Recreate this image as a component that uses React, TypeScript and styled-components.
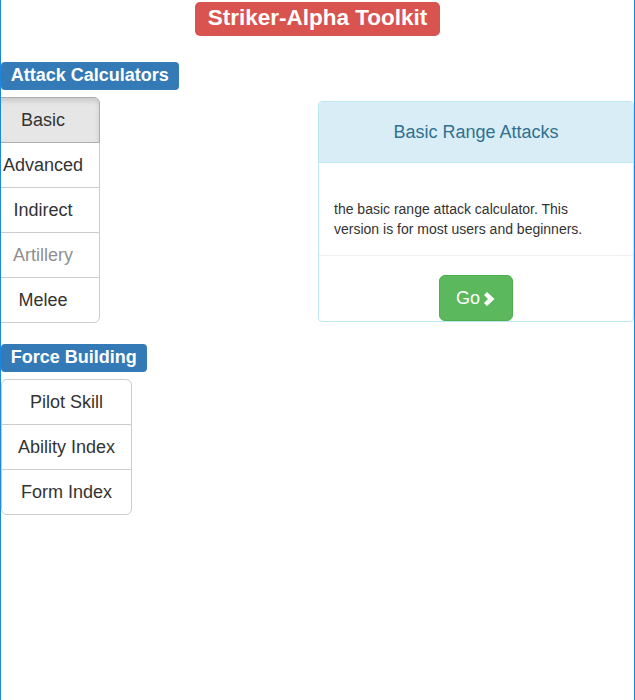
import styled, { createGlobalStyle } from 'styled-components';

const GlobalStyle = createGlobalStyle`
  html, body {
    margin: 0;
    padding: 0;
    background: #fff;
  }
  body {
    font-family: "Liberation Sans", Arial, Helvetica, sans-serif;
    font-size: 14px;
    line-height: 1.42857;
    color: #333;
  }
  * {
    box-sizing: border-box;
  }
`;

type Tone = 'danger' | 'primary';

const attackButtons = [
  { name: 'Basic', active: true },
  { name: 'Advanced' },
  { name: 'Indirect' },
  { name: 'Artillery', disabled: true },
  { name: 'Melee' },
];

const forceButtons = ['Pilot Skill', 'Ability Index', 'Form Index'];

const ChevronRight = () => (
  <svg width="13" height="14" viewBox="0 0 13 14" aria-hidden="true">
    <polygon points="1,3 4,0 11.5,7 4,14 1,11 5,7" fill="#fff" />
  </svg>
);

const App = () => {
  return (
    <>
      <GlobalStyle />
      <Page>
        <Title>
          <Label tone="danger" big>
            Striker-Alpha Toolkit
          </Label>
        </Title>

        <SectionHeading>
          <Label tone="primary">Attack Calculators</Label>
        </SectionHeading>

        <Row>
          <Column>
            <ButtonGroup shift={-15}>
              {attackButtons.map((b) => (
                <GroupButton key={b.name} active={b.active} muted={b.disabled}>
                  {b.name}
                </GroupButton>
              ))}
            </ButtonGroup>
          </Column>
          <Column>
            <Panel>
              <PanelHeading>Basic Range Attacks</PanelHeading>
              <PanelBody>
                the basic range attack calculator. This version is for most
                users and beginners.
              </PanelBody>
              <PanelFooter>
                <GoButton>
                  Go <ChevronRight />
                </GoButton>
              </PanelFooter>
            </Panel>
          </Column>
        </Row>

        <SectionHeading spaced>
          <Label tone="primary">Force Building</Label>
        </SectionHeading>

        <ButtonGroup shift={0}>
          {forceButtons.map((name) => (
            <GroupButton key={name}>{name}</GroupButton>
          ))}
        </ButtonGroup>
      </Page>
    </>
  );
};

export default App;

const Page = styled.div`
  height: 700px;
  border-left: 1px solid #1b87de;
  border-right: 1px solid #1b87de;
  overflow: hidden;
`;

const Title = styled.h2`
  margin: 0;
  padding-top: 2px;
  text-align: center;
  line-height: 0;
`;

const SectionHeading = styled.h3<{ spaced?: boolean }>`
  margin: ${(p) => (p.spaced ? '21px' : '26px')} 0 7px;
  line-height: 0;
`;

const Label = styled.span<{ tone: Tone; big?: boolean }>`
  display: inline-block;
  padding: ${(p) => (p.big ? '5px 12.5px 7px' : '4px 9.8px 6px')};
  font-size: ${(p) => (p.big ? '22.5px' : '18px')};
  line-height: ${(p) => (p.big ? '22px' : '18px')};
  font-weight: bold;
  color: #fff;
  white-space: nowrap;
  border-radius: ${(p) => (p.big ? '5px' : '4px')};
  background-color: ${(p) => (p.tone === 'danger' ? '#d9534f' : '#337ab7')};
`;

const Row = styled.div`
  display: flex;
`;

const Column = styled.div`
  width: 50%;
`;

const ButtonGroup = styled.div<{ shift: number }>`
  display: inline-flex;
  flex-direction: column;
  margin-left: ${(p) => p.shift}px;
  vertical-align: top;
`;

const GroupButton = styled.div<{ active?: boolean; muted?: boolean }>`
  padding: 11px 16px 9px;
  font-size: 18px;
  line-height: 1.3333;
  text-align: center;
  white-space: nowrap;
  color: ${(p) => (p.muted ? '#8f8f8f' : '#333')};
  background-color: ${(p) => (p.active ? '#e6e6e6' : '#fff')};
  border: 1px solid ${(p) => (p.active ? '#adadad' : '#ccc')};
  box-shadow: ${(p) => (p.active ? 'inset 0 3px 5px rgba(0, 0, 0, 0.125)' : 'none')};
  position: relative;
  z-index: ${(p) => (p.active ? 2 : 0)};

  & + & {
    margin-top: -1px;
  }

  &:first-child {
    border-top-left-radius: 6px;
    border-top-right-radius: 6px;
  }

  &:last-child {
    border-bottom-left-radius: 6px;
    border-bottom-right-radius: 6px;
  }
`;

const Panel = styled.div`
  margin-top: 4px;
  margin-left: 0.5px;
  border: 1px solid #bce8f1;
  border-radius: 4px;
  background: #fff;
  overflow: hidden;
`;

const PanelHeading = styled.div`
  padding: 20px 15px;
  font-size: 18px;
  line-height: 20px;
  text-align: center;
  color: #31708f;
  background-color: #d9edf7;
  border-bottom: 1px solid #bce8f1;
  border-top-left-radius: 3px;
  border-top-right-radius: 3px;
`;

const PanelBody = styled.div`
  padding: 36px 25px 16px 15px;
  font-size: 14px;
  line-height: 20px;
  color: #333;
`;

const PanelFooter = styled.div`
  padding-top: 19px;
  border-top: 1px solid #f0f0f0;
  text-align: center;
  line-height: 0;
`;

const GoButton = styled.div`
  display: inline-flex;
  align-items: center;
  gap: 3px;
  padding: 11px 16px 9px;
  font-size: 18px;
  line-height: 1.3333;
  color: #fff;
  background-color: #5cb85c;
  border: 1px solid #4cae4c;
  border-radius: 6px;

  svg {
    flex-shrink: 0;
  }
`;
